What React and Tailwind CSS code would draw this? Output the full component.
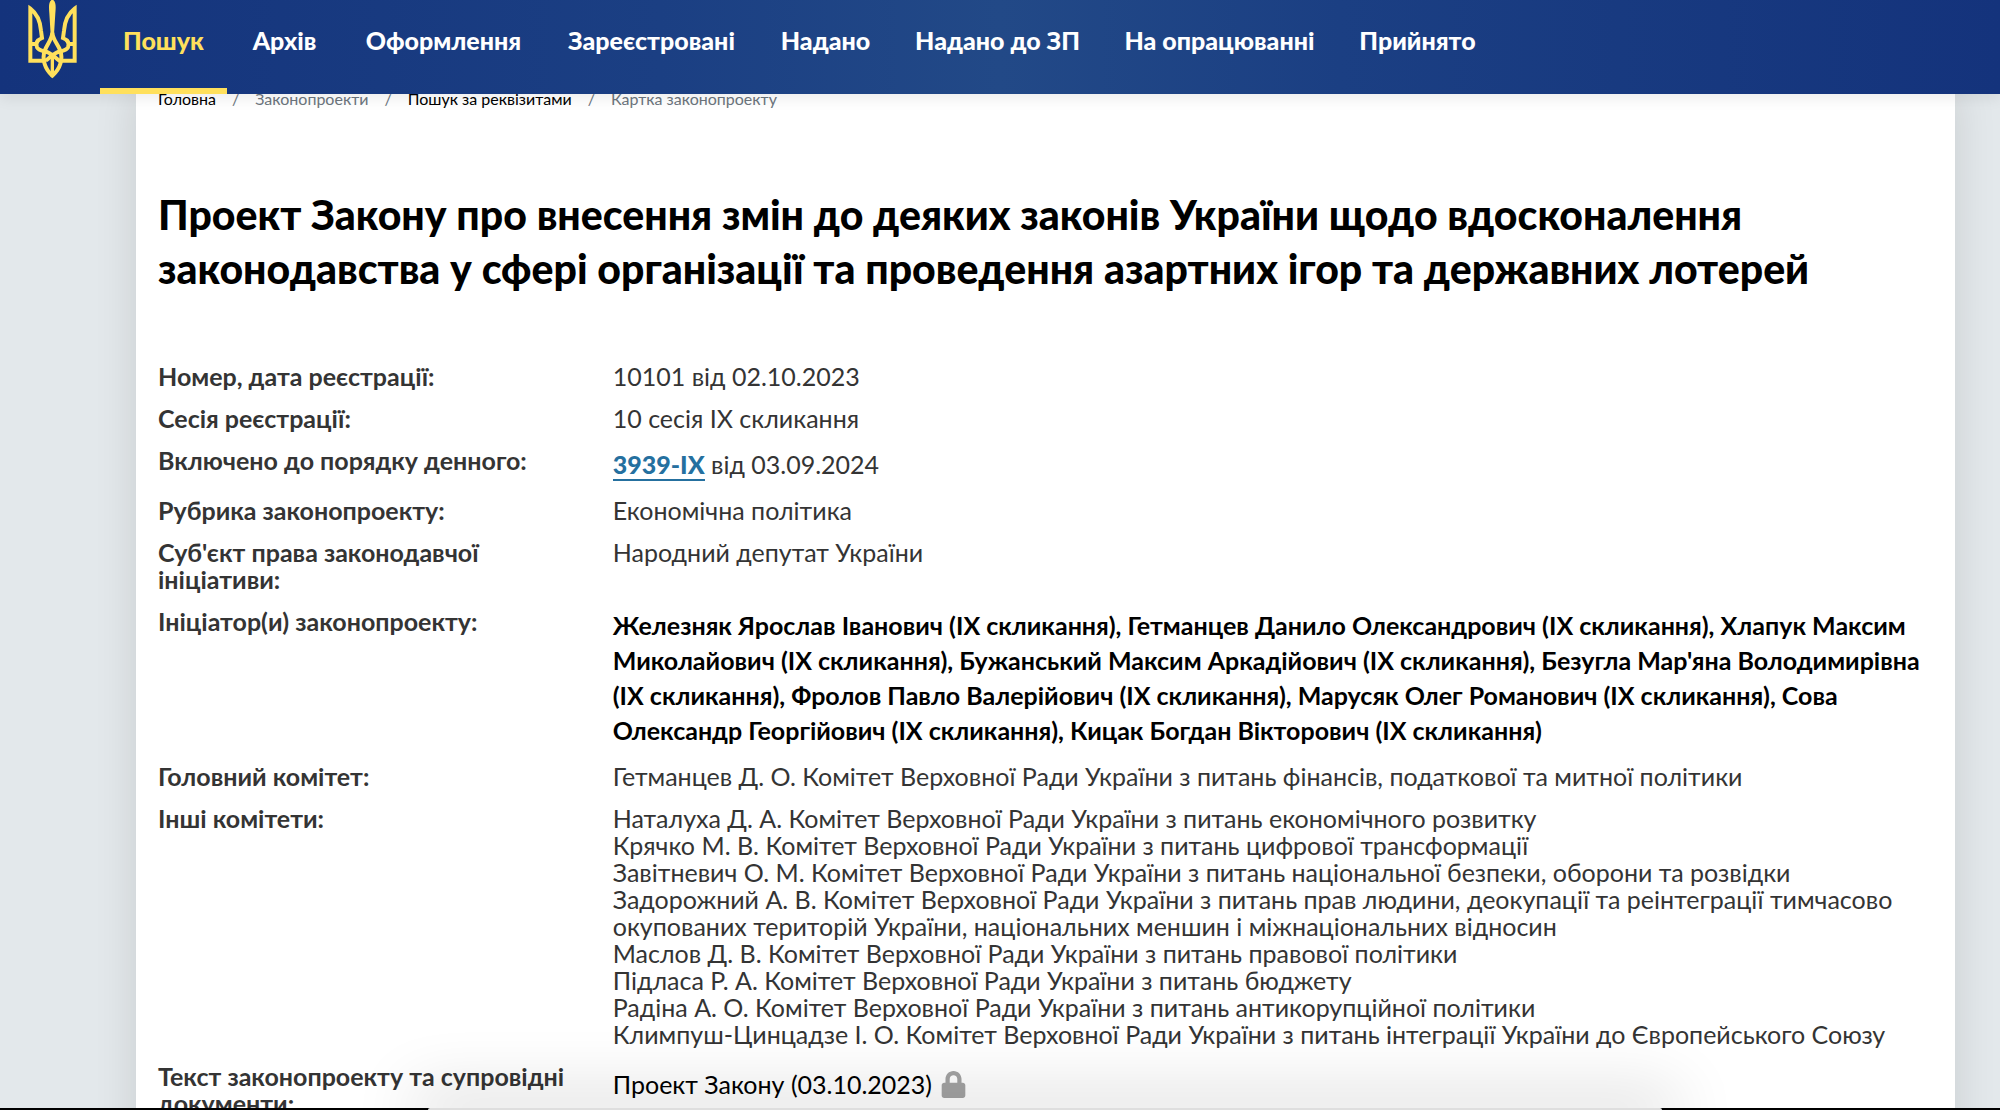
import { FaLock } from "react-icons/fa";

const NAV = [
  { label: "Пошук", width: "w-[127px]", active: true },
  { label: "Архів", width: "w-[115px]" },
  { label: "Оформлення", width: "w-[203px]" },
  { label: "Зареєстровані", width: "w-[213px]" },
  { label: "Надано", width: "w-[135px]" },
  { label: "Надано до ЗП", width: "w-[209px]" },
  { label: "На опрацюванні", width: "w-[235px]" },
  { label: "Прийнято", width: "w-[161px]" },
];

const INITIATORS = [
  "Железняк Ярослав Іванович (IX скликання), Гетманцев Данило Олександрович (IX скликання), Хлапук Максим",
  "Миколайович (IX скликання), Бужанський Максим Аркадійович (IX скликання), Безугла Мар'яна Володимирівна",
  "(IX скликання), Фролов Павло Валерійович (IX скликання), Марусяк Олег Романович (IX скликання), Сова",
  "Олександр Георгійович (IX скликання), Кицак Богдан Вікторович (IX скликання)",
];

const COMMITTEES = [
  "Наталуха Д. А. Комітет Верховної Ради України з питань економічного розвитку",
  "Крячко М. В. Комітет Верховної Ради України з питань цифрової трансформації",
  "Завітневич О. М. Комітет Верховної Ради України з питань національної безпеки, оборони та розвідки",
  "Задорожний А. В. Комітет Верховної Ради України з питань прав людини, деокупації та реінтеграції тимчасово",
  "окупованих територій України, національних меншин і міжнаціональних відносин",
  "Маслов Д. В. Комітет Верховної Ради України з питань правової політики",
  "Підласа Р. А. Комітет Верховної Ради України з питань бюджету",
  "Радіна А. О. Комітет Верховної Ради України з питань антикорупційної політики",
  "Климпуш-Цинцадзе І. О. Комітет Верховної Ради України з питань інтеграції України до Європейського Союзу",
];

function Trident() {
  return (
    <svg viewBox="81 0 153 240" className="h-20 w-[51px]" fill="none" stroke="#ffe05c" strokeWidth="12" aria-label="Герб України">
      <path d="M137 182H91V26C112 42 121 64 123 92L126 114C112 120 106 130 111 142C117 154 134 152 146 158C160 165 166 174 178 182H224V26C203 42 194 64 192 92L189 114C203 120 209 130 204 142C198 154 181 152 169 158C155 165 149 174 137 182" />
      <path d="M91 132H108M207 132H224" />
      <path d="M157 98C155 120 143 130 134 152C126 176 133 206 157 227C182 206 189 176 181 152C172 130 159 120 157 98Z" />
      <path d="M157 160V230" strokeWidth="10" />
      <path d="M157 -2C146 4 146 18 148 40L152 104H162L166 40C168 18 168 4 157 -2Z" fill="#ffe05c" stroke="none" />
    </svg>
  );
}

function Row({ label, children }) {
  return (
    <div className="mb-[15px] flex leading-[27px]">
      <dt className="w-1/4 shrink-0 pl-[22px] font-bold">{label}</dt>
      <dd className="min-w-0 flex-1 pl-[22px]">{children}</dd>
    </div>
  );
}

export default function App() {
  return (
    <div className="relative h-screen overflow-hidden bg-[#e3e8eb] font-[Lato,sans-serif]">
      <header className="relative z-10 flex h-[94px] bg-[linear-gradient(90deg,#14337c,#1b3f83_33%,#224987_50%,#1b3f83_67%,#14337c)] shadow-[0_4px_14px_rgba(0,0,0,0.08)]">
        <a href="#" className="w-[100px] shrink-0 pl-[27px]">
          <Trident />
        </a>
        <nav className="flex text-[25px] leading-[80px] font-black whitespace-nowrap text-white">
          {NAV.map((item) => (
            <a
              key={item.label}
              href="#"
              className={`${item.width} flex justify-center border-b-[6px] ${item.active ? "border-[#ffe05c] text-[#ffe05c]" : "border-transparent"}`}
            >
              {item.label}
            </a>
          ))}
        </nav>
      </header>

      <div className="pr-[45px] pl-[136px]">
        <main className="h-[1200px] bg-white shadow-[0_0_40px_rgba(0,0,0,0.12)]">
          <nav className="-mt-[5px] flex h-5 items-center gap-4 px-[22px] text-[16px] leading-5 whitespace-nowrap text-[#6c757d]">
            <a href="#" className="text-black">Головна</a>
            <span>/</span>
            <span>Законопроекти</span>
            <span>/</span>
            <a href="#" className="text-black">Пошук за реквізитами</a>
            <span>/</span>
            <span>Картка законопроекту</span>
          </nav>

          <h1 className="mt-[79px] px-[22px] text-[41px] leading-[54px] font-black whitespace-nowrap text-black">
            Проект Закону про внесення змін до деяких законів України щодо вдосконалення
            <br />
            законодавства у сфері організації та проведення азартних ігор та державних лотерей
          </h1>

          <dl className="mt-[67px] text-[25px] text-[#343434]">
            <Row label="Номер, дата реєстрації:">10101 від 02.10.2023</Row>
            <Row label="Сесія реєстрації:">10 сесія IX скликання</Row>
            <Row label="Включено до порядку денного:">
              <div className="leading-[35px]">
                <a href="#" className="border-b-2 border-[#25709f] font-black text-[#25709f]">3939-IX</a> від 03.09.2024
              </div>
            </Row>
            <Row label="Рубрика законопроекту:">Економічна політика</Row>
            <Row label={<>Суб'єкт права законодавчої<br />ініціативи:</>}>Народний депутат України</Row>
            <Row label="Ініціатор(и) законопроекту:">
              <div className="leading-[35px] font-bold whitespace-nowrap text-black">
                {INITIATORS.map((line) => (
                  <div key={line}>{line}</div>
                ))}
              </div>
            </Row>
            <Row label="Головний комітет:">
              Гетманцев Д. О. Комітет Верховної Ради України з питань фінансів, податкової та митної політики
            </Row>
            <Row label="Інші комітети:">
              <div className="whitespace-nowrap">
                {COMMITTEES.map((line) => (
                  <div key={line}>{line}</div>
                ))}
              </div>
            </Row>
            <Row label={<>Текст законопроекту та супровідні<br />документи:</>}>
              <a href="#" className="flex items-center gap-2 leading-[42px] text-black">
                Проект Закону (03.10.2023)
                <FaLock className="text-[27px] text-[#a3a3a3]" />
              </a>
            </Row>
          </dl>
        </main>
      </div>

      <div className="absolute inset-x-0 bottom-0 flex h-[2px] bg-black">
        <div className="mr-[338px] ml-[428px] flex-1 rounded-t bg-[#dedede] shadow-[0_0_64px_16px_rgba(0,0,0,0.16)]" />
      </div>
    </div>
  );
}
